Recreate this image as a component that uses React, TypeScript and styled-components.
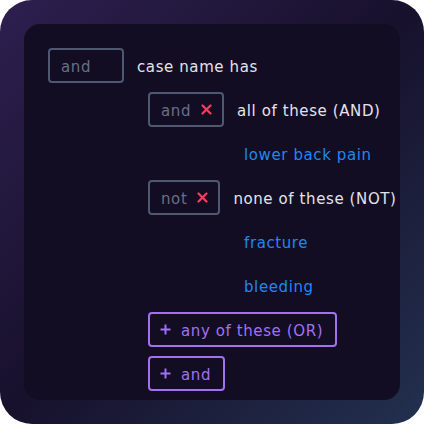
import React from 'react'
import styled, { createGlobalStyle } from 'styled-components'

const GlobalStyle = createGlobalStyle`
    html, body {
        margin: 0;
        padding: 0;
        background: #ffffff;
    }
    body {
        font-family: "DejaVu Sans", "Noto Sans", sans-serif;
        letter-spacing: 0.6px;
    }
`

const Frame = styled.div`
    width: 424px;
    height: 424px;
    box-sizing: border-box;
    padding: 24px;
    border-radius: 32px;
    background: linear-gradient(135deg, #2e1f4f 0%, #17112c 50%, #22304f 100%);
`

const Panel = styled.div`
    height: 100%;
    box-sizing: border-box;
    padding: 24px;
    border-radius: 16px;
    background: #130d24;
    display: grid;
    grid-auto-rows: 44px;
    align-content: start;
`

const Row = styled.div<{ indent: number }>`
    display: flex;
    align-items: flex-start;
    gap: 13px;
    padding-left: ${({ indent }) => indent}px;
    white-space: nowrap;
`

const Chip = styled.div<{ width?: number }>`
    display: flex;
    align-items: center;
    gap: 10px;
    box-sizing: border-box;
    height: 35px;
    ${({ width }) => (width ? `width: ${width}px;` : '')}
    padding: 2px 10px 0 11px;
    border: 2px solid #4e5870;
    border-radius: 4px;
    color: #667088;
    font-size: 15px;
`

const Remove = styled.span`
    display: flex;
    margin-top: -2px;
    color: #f43f5e;
`

const Label = styled.span`
    padding-top: 2px;
    line-height: 35px;
    font-size: 15px;
    color: #e4e2ea;
`

const Term = styled(Label)`
    color: #1e88f2;
`

const AddButton = styled.button`
    display: flex;
    align-items: center;
    gap: 10px;
    box-sizing: border-box;
    height: 35px;
    padding: 2px 12px 0 10px;
    border: 2px solid #a270f2;
    border-radius: 4px;
    background: transparent;
    color: #a270f2;
    font-family: inherit;
    font-size: 15px;
    letter-spacing: inherit;
    white-space: nowrap;
`

const Cross = (): React.ReactElement => (
    <svg width="11" height="11" viewBox="0 0 11 11">
        <path d="M1.5 1.5 L9.5 9.5 M9.5 1.5 L1.5 9.5" stroke="currentColor" strokeWidth="2.2" strokeLinecap="round" />
    </svg>
)

const Plus = (): React.ReactElement => (
    <svg width="11" height="11" viewBox="0 0 11 11" style={{ marginTop: -2 }}>
        <path d="M5.5 0.5 V10.5 M0.5 5.5 H10.5" stroke="currentColor" strokeWidth="2" />
    </svg>
)

const terms = ['fracture', 'bleeding']

export default function App (): React.ReactElement {
    return (
        <>
            <GlobalStyle />
            <Frame>
                <Panel>
                    <Row indent={0}>
                        <Chip width={76}>and</Chip>
                        <Label>case name has</Label>
                    </Row>
                    <Row indent={100}>
                        <Chip>and<Remove><Cross /></Remove></Chip>
                        <Label>all of these (AND)</Label>
                    </Row>
                    <Row indent={196}>
                        <Term>lower back pain</Term>
                    </Row>
                    <Row indent={100}>
                        <Chip>not<Remove><Cross /></Remove></Chip>
                        <Label>none of these (NOT)</Label>
                    </Row>
                    {terms.map((term) => (
                        <Row indent={196} key={term}>
                            <Term>{term}</Term>
                        </Row>
                    ))}
                    <Row indent={100}>
                        <AddButton><Plus />any of these (OR)</AddButton>
                    </Row>
                    <Row indent={100}>
                        <AddButton><Plus />and</AddButton>
                    </Row>
                </Panel>
            </Frame>
        </>
    )
}
